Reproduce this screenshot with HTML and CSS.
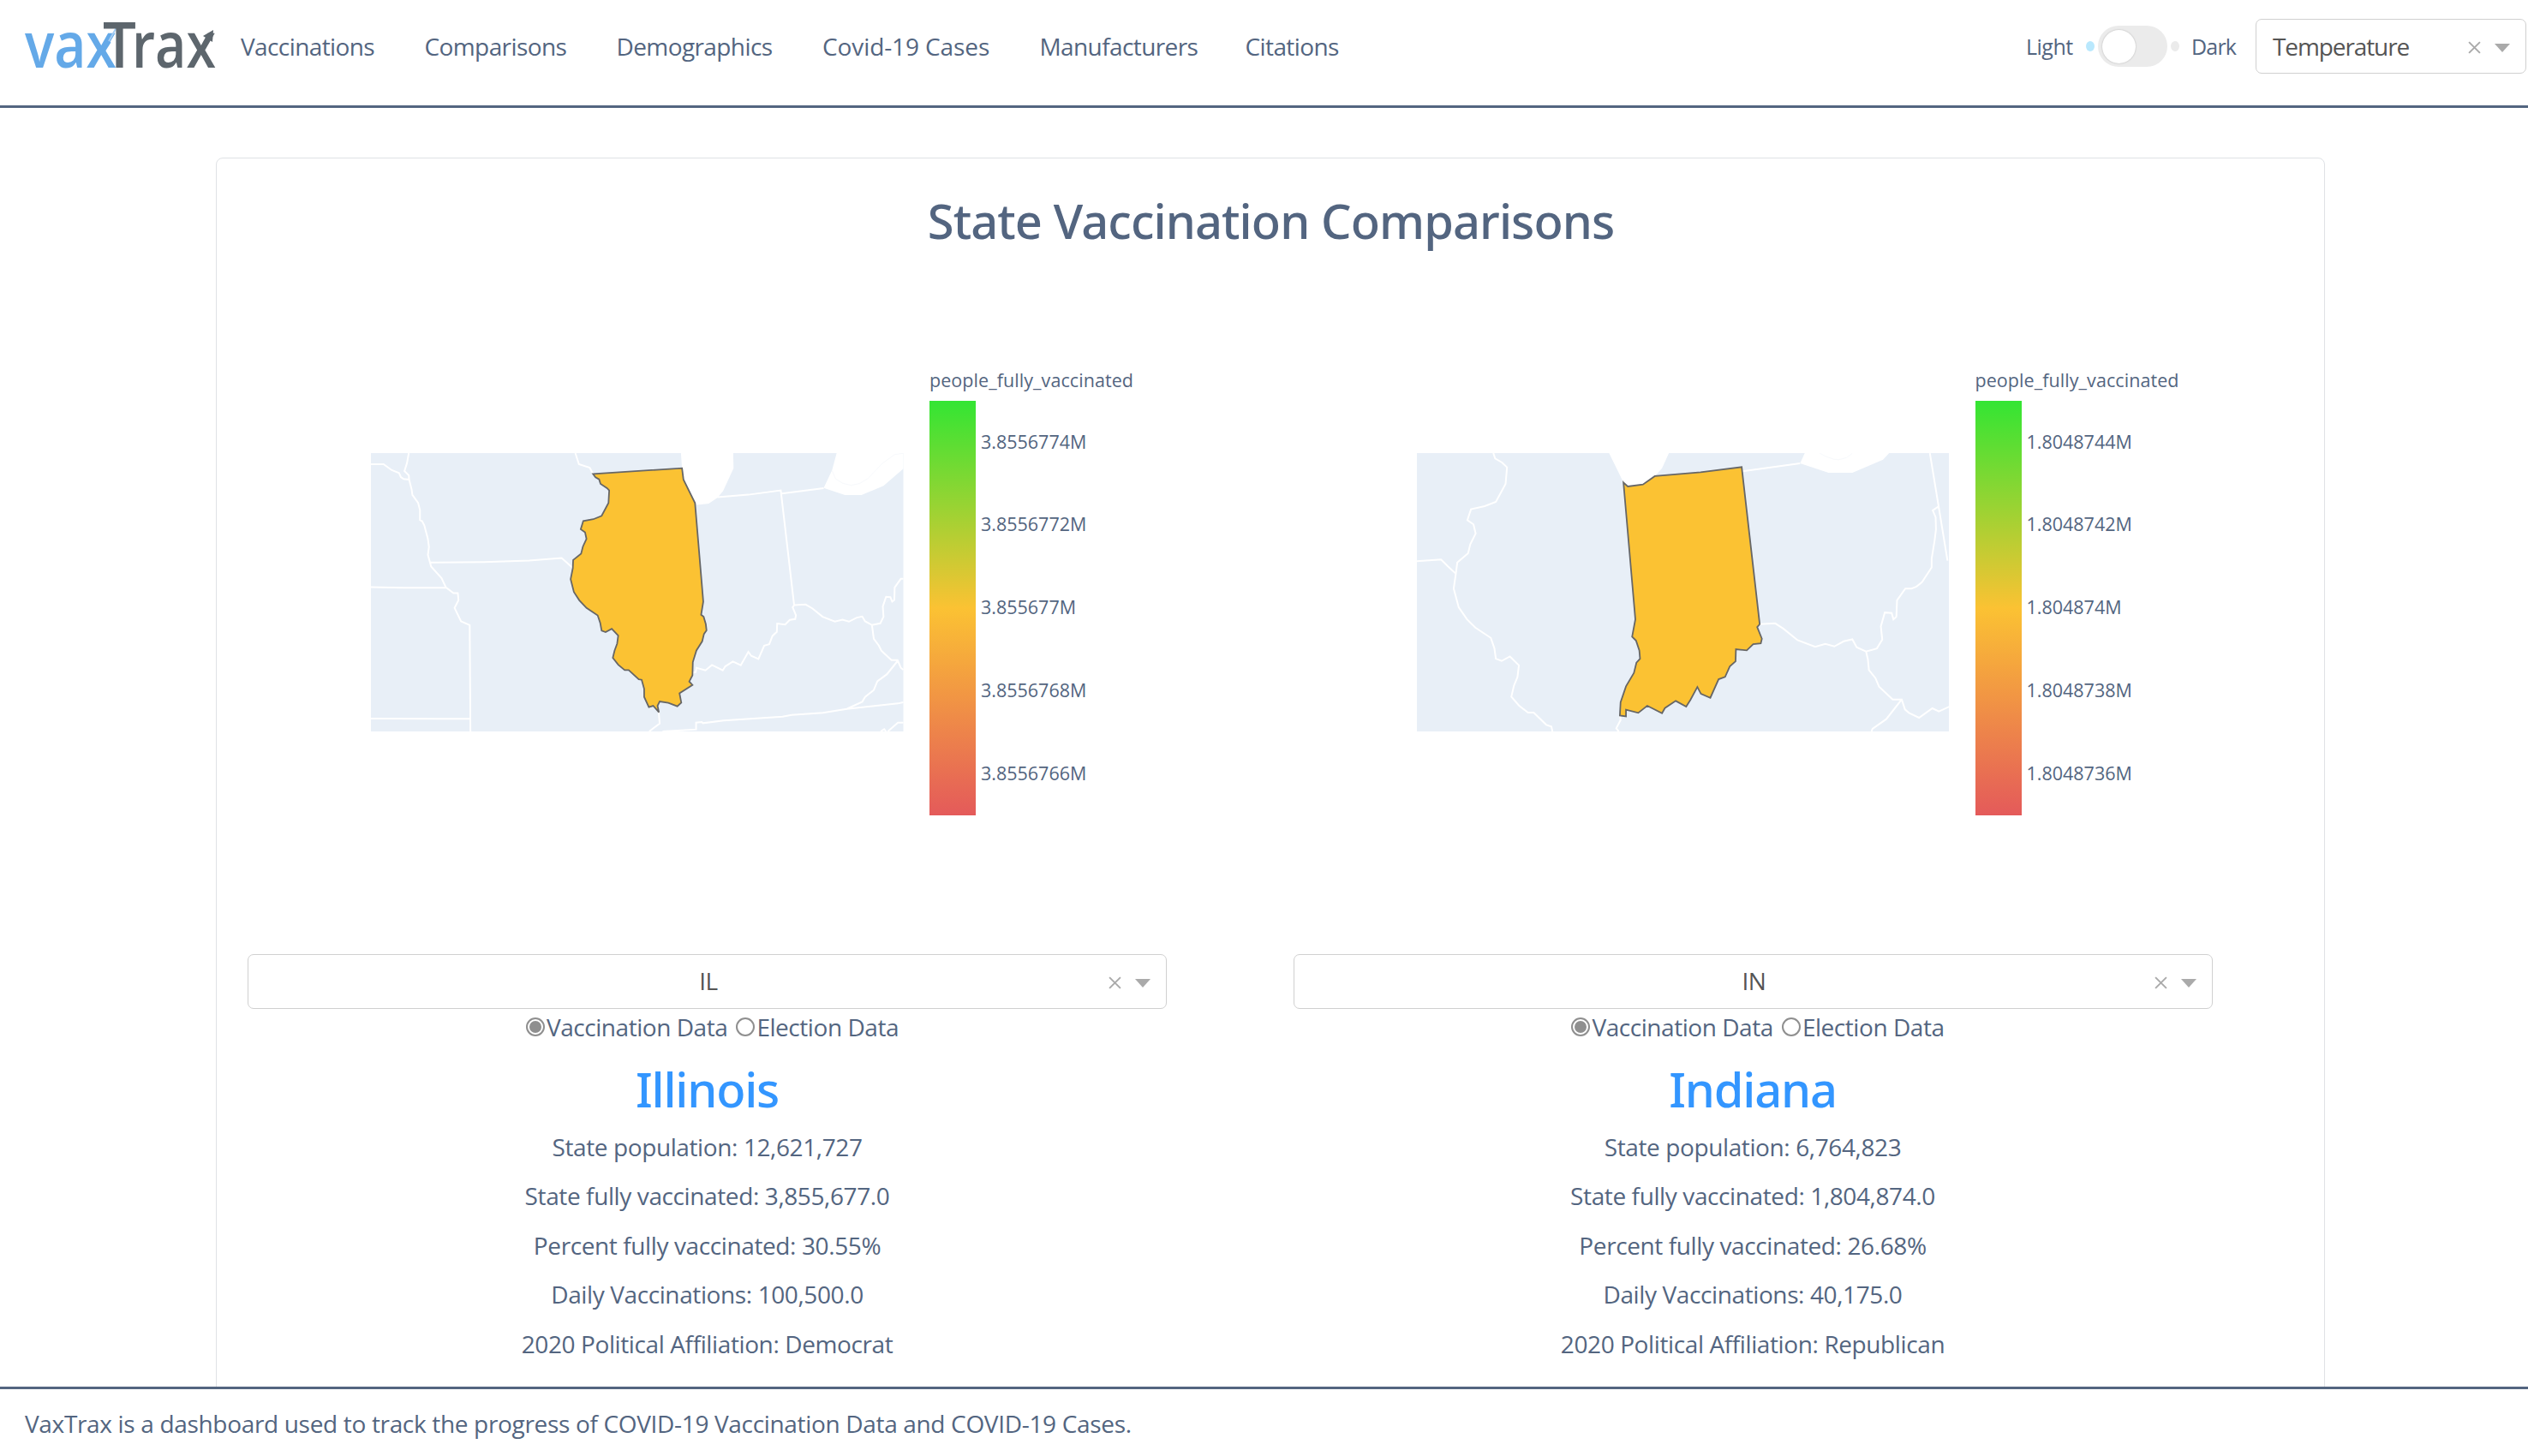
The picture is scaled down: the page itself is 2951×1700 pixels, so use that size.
FILE: index.html
```html
<!DOCTYPE html>
<html lang="en">
<head>
<meta charset="utf-8">
<title>VaxTrax</title>
<link rel="stylesheet" href="styles.css">
</head>
<body>
<header class="header">
  <svg class="logo" viewBox="0 0 224 60" role="img" aria-label="vaxTrax">
    <text class="logo-vax" x="0" y="56" textLength="107" lengthAdjust="spacingAndGlyphs">vax</text>
    <path class="needle-thin" d="M97 27 107 9"/>
    <path class="needle-body" d="M91 36 98 25"/>
    <text class="logo-trax" x="91" y="56" textLength="39" lengthAdjust="spacingAndGlyphs">T</text>
    <text class="logo-trax" x="125" y="56" textLength="98" lengthAdjust="spacingAndGlyphs">rax</text>
    <path class="logo-arrow" d="M220 12 219 26 208 19Z"/>
  </svg>
  <nav class="nav">
    <a>Vaccinations</a><a>Comparisons</a><a>Demographics</a><a class="wide">Covid-19 Cases</a><a>Manufacturers</a><a>Citations</a>
  </nav>
  <div class="theme">
    <span class="theme-label light">Light</span>
    <i class="dot on"></i>
    <span class="toggle"><i class="knob"></i></span>
    <i class="dot"></i>
    <span class="theme-label dark">Dark</span>
  </div>
  <div class="select small">
    <span class="value">Temperature</span>
    <svg class="clear" viewBox="0 0 14 14"><path d="M1 1 13 13M13 1 1 13"/></svg>
    <svg class="caret" viewBox="0 0 18 10"><path d="M0 0H18L9 10Z"/></svg>
  </div>
</header>

<main class="main">
  <section class="card">
    <h1 class="title">State Vaccination Comparisons</h1>
    <div class="columns">
      <article class="state">
        <div class="plot">
          <svg class="map" viewBox="31 87 1477 976" preserveAspectRatio="none">
            <rect class="land" x="31" y="87" width="1477" height="976"/>
            <path class="lake" d="M891 87 894 140 898 180 930 262 936 269 968 264 992 244 1008 220 1037 140 1036 87ZM1323 87 1310 148 1287 209 1346 234H1392L1453 202 1508 142V87Z"/>
            <path class="border" d="M31 126H66L89 147 109 157 114 171 122 178 137 180M136 87 131 122 124 150 136 165 137 180 144 215 146 234 162 262 167 287V322L173 326 179 340 189 388 192 416 189 444 198 485 227 526 239 558 260 578H272L274 603 263 630 281 677 305 690 307 1063M31 557 120 559H239M31 1018 305 1019M195 471 345 469 470 464 560 455 592 491M598 87 608 126 638 138 647 160M992 242 1078 233 1168 218 1205 620 1201 628 1210 656 1208 669 1193 672 1180 688 1158 685 1157 714 1145 728 1136 757 1122 762 1106 809 1086 798 1078 784 1057 831 1035 818 1014 835 1007 849 977 830 959 849 934 840 932 855 922 858M1171 229 1287 210M1205 620 1237 618 1256 632 1284 661 1318 678 1339 671 1357 678 1379 664 1394 660 1402 677 1421 690 1444 684 1453 661 1451 625 1460 591 1472 592 1477 608 1483 602 1484 558 1501 528H1508M1421 690 1426 738 1440 762 1447 780 1475 813H1492L1501 840 1508 847M1492 816 1462 863 1436 887 1426 918 1402 942 1394 959 1351 984 1285 998 1198 1005 1173 1011 1010 1025 952 1034 949 1030 933 1032V1056L840 1063M1351 984 1493 965 1508 961M829 990 832 1035 803 1063M1445 1063 1455 1055 1460 1063M1465 1063 1493 1032H1508"/>
            <path class="faint" d="M1310 148 1320 177 1340 193 1363 200 1386 194 1409 177 1450 123 1484 92 1508 88"/>
            <path class="shape" d="M647 160 894 140 898 180 930 262 953 608 947 654 954 661 960 687 962 709 955 721 950 747 934 779 924 820 923 866 914 888 923 900 887 929 892 962 881 975 856 963 832 958 826 973 830 996 814 973 802 978 789 942V914L782 882 774 880 746 848H735L717 829 702 805 707 779 714 755 717 727 699 703 682 715 671 710 667 682 660 656 629 630 609 603 594 574 585 529 591 491 592 462 614 440 619 415 629 388 625 365 613 354 620 325 648 319 671 307 690 262 692 218 686 210 668 195 664 179 654 172Z"/>
          </svg>
          <div class="colorbar">
            <div class="colorbar-title">people_fully_vaccinated</div>
            <div class="colorbar-body">
              <div class="gradient"></div>
              <div class="ticks"><span>3.8556774M</span><span>3.8556772M</span><span>3.855677M</span><span>3.8556768M</span><span>3.8556766M</span></div>
            </div>
          </div>
        </div>
        <div class="select">
          <span class="value">IL</span>
          <svg class="clear" viewBox="0 0 14 14"><path d="M1 1 13 13M13 1 1 13"/></svg>
          <svg class="caret" viewBox="0 0 18 10"><path d="M0 0H18L9 10Z"/></svg>
        </div>
        <div class="radios">
          <i class="radio checked"></i><span>Vaccination Data</span>
          <i class="radio"></i><span>Election Data</span>
        </div>
        <h2 class="name">Illinois</h2>
        <p class="fact">State population: 12,621,727</p>
        <p class="fact">State fully vaccinated: 3,855,677.0</p>
        <p class="fact">Percent fully vaccinated: 30.55%</p>
        <p class="fact">Daily Vaccinations: 100,500.0</p>
        <p class="fact">2020 Political Affiliation: Democrat</p>
      </article>

      <article class="state">
        <div class="plot">
          <svg class="map" viewBox="33 87 1477 976" preserveAspectRatio="none">
            <rect class="land" x="33" y="87" width="1477" height="976"/>
            <path class="lake" d="M566 87 606 190 618 204 660 197 693 168 713 140 732 87ZM1109 87 1096 123 1175 156H1241L1326 110 1343 87Z"/>
            <path class="border" d="M245 87 250 106 269 120 283 137 279 195 252 258 221 273 183 284 173 322 190 337 196 369 181 407 175 438 145 471 141 510 135 562 149 628 172 670 195 699 238 735 248 772 252 808 268 816 291 800 316 831 312 872 302 903 295 941 316 972 341 997H357L392 1040 406 1046 409 1063M33 466 100 460 119 484 141 510M936 151 1096 123M984 687 1027 684 1050 703 1089 743 1138 766 1166 756 1191 765 1217 747 1241 740 1253 768 1279 783 1309 772 1324 741 1320 695 1331 646 1350 648 1355 670 1363 661 1365 603 1388 562H1405L1419 555 1434 540 1461 488V457L1469 395 1473 355 1472 312 1464 288 1479 275M1456 87 1505 464M1279 783 1284 810 1287 848 1305 876 1315 906 1353 951H1378L1387 986 1398 998 1426 1015 1463 982 1481 993 1510 976M1378 951 1335 1020 1297 1054 1294 1063M597 1007 598 1023 586 1052 593 1063"/>
            <path class="faint" d="M1150 87 1166 98 1190 109 1204 110 1225 103 1241 88"/>
            <path class="shape" d="M606 190 618 204 660 197 693 168 820 154 934 136 984 687 977 697 990 738 987 754 966 757 948 779 918 775 917 817 901 835 888 872 870 880 847 945 821 931 811 907 792 952 780 976 751 956 721 981 713 999 672 973 647 998 613 987V1010L596 1007 598 961 613 905 635 858 642 822 652 808 650 779 641 745 630 731 639 670Z"/>
          </svg>
          <div class="colorbar">
            <div class="colorbar-title">people_fully_vaccinated</div>
            <div class="colorbar-body">
              <div class="gradient"></div>
              <div class="ticks"><span>1.8048744M</span><span>1.8048742M</span><span>1.804874M</span><span>1.8048738M</span><span>1.8048736M</span></div>
            </div>
          </div>
        </div>
        <div class="select">
          <span class="value">IN</span>
          <svg class="clear" viewBox="0 0 14 14"><path d="M1 1 13 13M13 1 1 13"/></svg>
          <svg class="caret" viewBox="0 0 18 10"><path d="M0 0H18L9 10Z"/></svg>
        </div>
        <div class="radios">
          <i class="radio checked"></i><span>Vaccination Data</span>
          <i class="radio"></i><span>Election Data</span>
        </div>
        <h2 class="name">Indiana</h2>
        <p class="fact">State population: 6,764,823</p>
        <p class="fact">State fully vaccinated: 1,804,874.0</p>
        <p class="fact">Percent fully vaccinated: 26.68%</p>
        <p class="fact">Daily Vaccinations: 40,175.0</p>
        <p class="fact">2020 Political Affiliation: Republican</p>
      </article>
    </div>
  </section>
</main>

<footer class="footer">VaxTrax is a dashboard used to track the progress of COVID-19 Vaccination Data and COVID-19 Cases.</footer>
</body>
</html>
```
FILE: styles.css
```css
* { box-sizing: border-box; }

body {
  margin: 0;
  height: 1700px;
  display: flex;
  flex-direction: column;
  overflow: hidden;
  background: #fff;
  color: #536580;
  font: 28px/1.4 "Open Sans", "Noto Sans", sans-serif;
  letter-spacing: -0.39px;
}

svg { display: block; flex: none; }

/* Header */
.header {
  flex: none;
  display: flex;
  align-items: center;
  height: 126px;
  padding: 0 2px 15px 29px;
  border-bottom: 3px solid #536580;
}
.logo { width: 224px; height: 60px; margin-top: -3px; overflow: visible; }
.logo text { font-size: 75px; font-weight: 600; letter-spacing: 0; }
.logo-vax { fill: #64a9e8; }
.logo-trax, .logo-arrow { fill: #5d666d; }
.needle-thin { stroke: #a5cdf3; stroke-width: 2; }
.needle-body { stroke: #64a9e8; stroke-width: 6; }
.nav {
  flex: 1;
  display: grid;
  grid-template-columns: 214.5px 224px 240.5px 253.5px 240px auto;
  padding: 1px 0 0 28px;
  letter-spacing: -0.6px;
}
.nav .wide { letter-spacing: -0.1px; }
.theme { display: flex; align-items: center; font-size: 25px; }
.theme-label { letter-spacing: -0.5px; }
.light { width: 70px; }
.dark { width: 75px; margin-left: 14px; letter-spacing: -0.8px; }
.dot { width: 10px; height: 12px; border-radius: 50%; background: #ebebeb; }
.dot.on { background: #b9e8fd; }
.toggle {
  display: flex;
  align-items: center;
  width: 81px;
  height: 48px;
  margin: 0 4px;
  padding-left: 5px;
  border-radius: 24px;
  background: #ebebeb;
}
.knob {
  width: 39px;
  height: 39px;
  border-radius: 50%;
  background: #fff;
  box-shadow: 0 0 2px rgba(0, 0, 0, .25);
}

/* Dropdown */
.select {
  display: flex;
  align-items: center;
  height: 64px;
  padding: 0 18px 0 70px;
  border: 1px solid #d0d0d0;
  border-radius: 7px;
  background: #fff;
  color: #555;
}
.select .value { flex: 1; text-align: center; }
.select.small { width: 316px; padding-left: 19px; }
.select.small .value { padding-top: 2px; text-align: left; letter-spacing: -1.1px; }
.clear { width: 15px; height: 15px; margin: 2px 16px 0 0; }
.clear path { fill: none; stroke: #aaa; stroke-width: 1.8; }
.caret { width: 18px; height: 10px; margin-top: 3px; }
.caret path { fill: #aaa; }

/* Card */
.main { flex: 1; min-height: 0; overflow: hidden; padding: 58px 237px 0 252px; }
.card {
  height: 1600px;
  padding: 37px 0 0 36px;
  border: 1px solid #dfe2e5;
  border-radius: 8px;
}
.title {
  margin: 0 35px 0 0;
  text-align: center;
  font: 500 56px/70px "Noto Sans", sans-serif;
  letter-spacing: -0.9px;
}
.columns { display: grid; grid-template-columns: 1073px 1073px; column-gap: 147.5px; }

/* Map and colour scale */
.plot { display: flex; height: 822px; padding-left: 144px; }
.map { width: 621.5px; height: 325px; margin-top: 237px; }
.map path { vector-effect: non-scaling-stroke; }
.land { fill: #e8eff7; }
.lake { fill: #fff; }
.border { fill: none; stroke: #fff; stroke-width: 2; }
.faint { fill: none; stroke: #f7f9fc; stroke-width: 1; }
.shape { fill: #fbc233; stroke: #666; stroke-width: 1.8; }
.colorbar { margin: 138px 0 0 30.5px; font-size: 21.5px; letter-spacing: 0; }
.colorbar-title { height: 37.5px; line-height: 28px; letter-spacing: 0.07px; }
.colorbar-body { display: flex; gap: 6px; }
.gradient {
  width: 54px;
  height: 484px;
  background: linear-gradient(#33e533, #fbc233 50%, #e45a5a);
}
.ticks { display: flex; flex-direction: column; line-height: 96.8px; }

/* State details */
.radios {
  display: flex;
  justify-content: center;
  align-items: center;
  height: 43px;
  padding-left: 12px;
  letter-spacing: -0.45px;
}
.radio {
  width: 22px;
  height: 22px;
  margin: -2px 2px 0 0;
  border: 2px solid #8f8f8f;
  border-radius: 50%;
  background: #fff;
}
.radio.checked { padding: 2px; background: #8f8f8f content-box; }
span + .radio { margin-left: 10px; }
.name {
  margin: 20px 0 10px;
  text-align: center;
  color: #3396ff;
  font: 500 56px/60px "Noto Sans", sans-serif;
  letter-spacing: -1.2px;
}
.fact { margin: 0; text-align: center; line-height: 57.4px; }

.footer {
  flex: none;
  height: 81px;
  padding: 21px 29px 0;
  border-top: 3px solid #536580;
  letter-spacing: -0.33px;
}
```
